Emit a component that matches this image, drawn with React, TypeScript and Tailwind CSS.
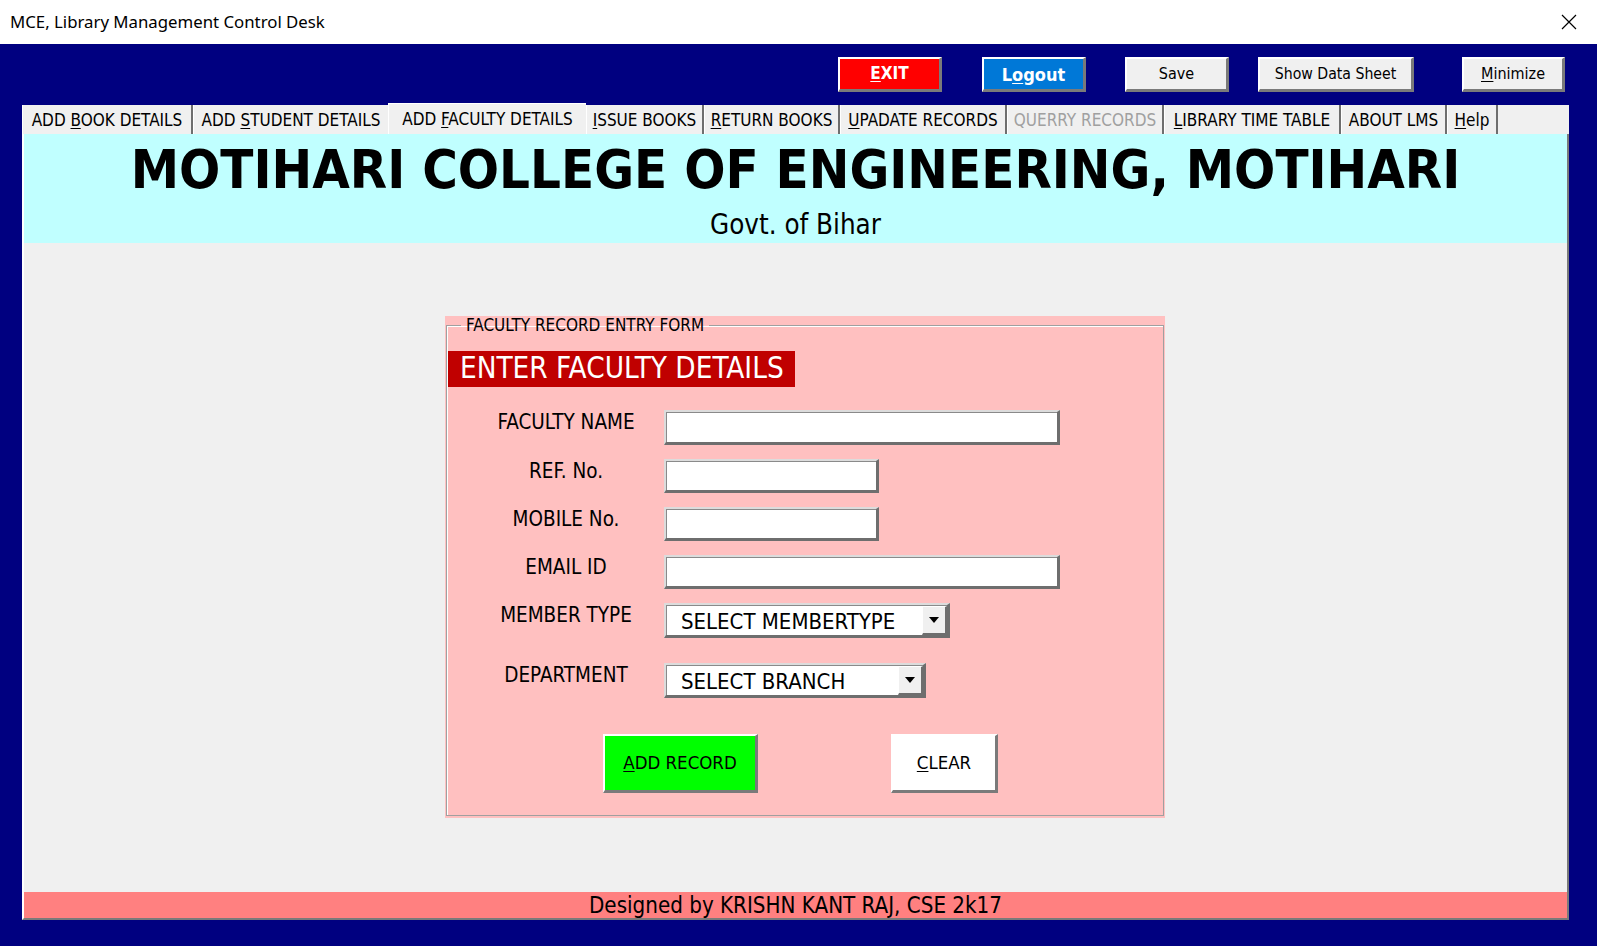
import React from 'react';

const tabs: { label: string; key?: number; w: number; active?: boolean; disabled?: boolean }[] = [
  { label: 'ADD BOOK DETAILS', key: 4, w: 171 },
  { label: 'ADD STUDENT DETAILS', key: 4, w: 195 },
  { label: 'ADD FACULTY DETAILS', key: 4, w: 198, active: true },
  { label: 'ISSUE BOOKS', key: 0, w: 118 },
  { label: 'RETURN BOOKS', key: 0, w: 136 },
  { label: 'UPADATE RECORDS', key: 0, w: 167 },
  { label: 'QUERRY RECORDS', w: 157, disabled: true },
  { label: 'LIBRARY TIME TABLE', key: 0, w: 177 },
  { label: 'ABOUT LMS', w: 106 },
  { label: 'Help', key: 0, w: 51 },
];

function Underline({ text, at }: { text: string; at?: number }) {
  if (at === undefined) return <>{text}</>;
  return (
    <>
      {text.slice(0, at)}
      <span className="underline underline-offset-2">{text[at]}</span>
      {text.slice(at + 1)}
    </>
  );
}

function TopButton({ children, w, ml, className }: { children: React.ReactNode; w: string; ml: string; className: string }) {
  return (
    <button
      className={`${w} ${ml} h-[35px] flex items-center justify-center border-t-2 border-l-2 border-t-white border-l-white border-b-[3px] border-r-[3px] border-b-[#7a7a7a] border-r-[#7a7a7a] ${className}`}
    >
      {children}
    </button>
  );
}

function TextBox({ w, h }: { w: string; h: string }) {
  return (
    <div className={`${w} ${h} border-t-2 border-l-2 border-t-[#dcdcdc] border-l-[#dcdcdc] border-b-[3px] border-r-[3px] border-b-[#6e6e6e] border-r-[#6e6e6e] bg-white`}>
      <div className="h-full w-full border-t border-l border-[#8a8a8a]" />
    </div>
  );
}

function Combo({ w, text }: { w: string; text: string }) {
  return (
    <div className={`${w} h-[35px] border-t-2 border-l-2 border-t-[#dcdcdc] border-l-[#dcdcdc] border-b-[3px] border-r-[3px] border-b-[#6e6e6e] border-r-[#6e6e6e] bg-white`}>
      <div className="h-full w-full border-t border-l border-[#8a8a8a] flex items-center">
        <span className="flex-1 pl-[14px] pt-[2px] text-[22px] leading-none text-black">{text}</span>
        <div className="w-[25px] h-full bg-[#f0f0f0] border-t border-l border-white border-b-2 border-r-2 border-b-[#6e6e6e] border-r-[#6e6e6e] flex items-center justify-center">
          <svg width="10" height="6" viewBox="0 0 10 6">
            <path d="M0 0 H10 L5 6 Z" fill="#000" />
          </svg>
        </div>
      </div>
    </div>
  );
}

function Row({ label, children, mt }: { label: string; children: React.ReactNode; mt: string }) {
  return (
    <div className={`flex items-center ${mt}`}>
      <div className="ml-[21px] w-[196px] text-center text-[20.5px] leading-none text-black mb-[10px] whitespace-nowrap">{label}</div>
      {children}
    </div>
  );
}

export default function App() {
  const tahoma = "font-['DejaVu_Sans_Condensed','DejaVu_Sans',sans-serif]";
  return (
    <div className={`w-[1597px] h-[946px] bg-[#000080] flex flex-col overflow-hidden ${tahoma}`}>
      {/* title bar */}
      <div className="h-[44px] bg-white flex items-center justify-between pl-[10px] pr-[20px] shrink-0">
        <span className="font-['Noto_Sans',sans-serif] text-[16.8px] text-black">MCE, Library Management Control Desk</span>
        <svg width="16" height="16" viewBox="0 0 16 16">
          <path d="M1 1 L15 15 M15 1 L1 15" stroke="#000" strokeWidth="1.2" />
        </svg>
      </div>

      <div className="flex-1 flex flex-col pl-[22px] pr-[28px]">
        {/* top buttons */}
        <div className="flex mt-[13px] pr-[4px]">
          <TopButton w="w-[104px]" ml="ml-auto" className="bg-[#ff0000] text-white font-bold text-[17px]">
            <Underline text="EXIT" at={0} />
          </TopButton>
          <TopButton w="w-[104px]" ml="ml-[40px]" className="bg-[#0078d7] text-white font-bold text-[18px]">
            <Underline text="Logout" at={1} />
          </TopButton>
          <TopButton w="w-[104px]" ml="ml-[39px]" className="bg-[#f0f0f0] text-black text-[16px]">
            Save
          </TopButton>
          <TopButton w="w-[156px]" ml="ml-[29px]" className="bg-[#f0f0f0] text-black text-[15.7px]">
            Show Data Sheet
          </TopButton>
          <TopButton w="w-[103px]" ml="ml-[48px]" className="bg-[#f0f0f0] text-black text-[16px]">
            <Underline text="Minimize" at={0} />
          </TopButton>
        </div>

        {/* panel */}
        <div className="mt-[11px] flex flex-col">
          <div className="flex items-end h-[31px]">
            {tabs.map((t, i) => {
              const beforeActive = tabs[i + 1]?.active;
              return (
                <div
                  key={t.label}
                  style={{ width: t.w }}
                  className={
                    t.active
                      ? 'h-[31px] bg-[#f0f0f0] border-t border-l border-white flex items-start justify-center pt-[3px] text-[17px] text-black'
                      : `h-[29px] bg-[#f0f0f0] border-l border-white ${beforeActive ? '' : 'border-r-2 border-r-[#6e6e6e]'} flex items-center justify-center pt-[2px] text-[17px] ${t.disabled ? 'text-[#a0a0a0]' : 'text-black'}`
                  }
                >
                  <span className="whitespace-nowrap">
                    <Underline text={t.label} at={t.key} />
                  </span>
                </div>
              );
            })}
            <div className="flex-1 h-[29px] bg-[#f0f0f0]" />
          </div>

          <div className="flex flex-col border-l-2 border-l-white border-r-2 border-r-[#7a7a7a] border-b-2 border-b-[#7a7a7a]">
            {/* header */}
            <div className="h-[109px] bg-[#c0ffff] flex flex-col items-center">
              <div className="mt-[6px] text-[54px] leading-[60px] font-bold text-black whitespace-nowrap">
                MOTIHARI COLLEGE OF ENGINEERING, MOTIHARI
              </div>
              <div className="mt-[8px] text-[27.5px] leading-[32px] text-black">Govt. of Bihar</div>
            </div>

            {/* body */}
            <div className="h-[649px] bg-[#f0f0f0] pt-[73px] pl-[421px]">
              <div className="w-[720px] bg-[#ffc0c0] px-[1px] pb-[2px]">
                <fieldset className="border border-[#a0a0a0] shadow-[inset_1px_1px_0_#ffffff] pb-[22px]">
                  <legend className="ml-[14px] px-[5px] text-[17px] leading-[18px] text-black">FACULTY RECORD ENTRY FORM</legend>
                  <div className="mt-[17px] ml-[1px] w-[347px] h-[36px] bg-[#c00000] flex items-center pl-[12px] text-white text-[29.4px] leading-none whitespace-nowrap">
                    ENTER FACULTY DETAILS
                  </div>

                  <Row label="FACULTY NAME" mt="mt-[23px]">
                    <TextBox w="w-[396px]" h="h-[35px]" />
                  </Row>
                  <Row label="REF. No." mt="mt-[14px]">
                    <TextBox w="w-[215px]" h="h-[34px]" />
                  </Row>
                  <Row label="MOBILE No." mt="mt-[14px]">
                    <TextBox w="w-[215px]" h="h-[34px]" />
                  </Row>
                  <Row label="EMAIL ID" mt="mt-[14px]">
                    <TextBox w="w-[396px]" h="h-[34px]" />
                  </Row>
                  <Row label="MEMBER TYPE" mt="mt-[14px]">
                    <Combo w="w-[286px]" text="SELECT MEMBERTYPE" />
                  </Row>
                  <Row label="DEPARTMENT" mt="mt-[25px]">
                    <Combo w="w-[262px]" text="SELECT BRANCH" />
                  </Row>

                  <div className="flex mt-[36px] ml-[156px]">
                    <button className="w-[155px] h-[59px] bg-[#00ff00] border-t-2 border-l-2 border-t-white border-l-white border-b-[3px] border-r-[3px] border-b-[#7a7a7a] border-r-[#7a7a7a] text-[18.5px] text-black">
                      <Underline text="ADD RECORD" at={0} />
                    </button>
                    <button className="ml-[133px] w-[107px] h-[59px] bg-white border-t-2 border-l-2 border-t-white border-l-white border-b-[3px] border-r-[3px] border-b-[#7a7a7a] border-r-[#7a7a7a] text-[18.5px] text-black">
                      <Underline text="CLEAR" at={0} />
                    </button>
                  </div>
                </fieldset>
              </div>
            </div>

            {/* footer */}
            <div className="h-[26px] bg-[#ff8080] flex items-center justify-center text-[22.2px] leading-none text-black">
              Designed by KRISHN KANT RAJ, CSE 2k17
            </div>
          </div>
        </div>
      </div>
    </div>
  );
}
